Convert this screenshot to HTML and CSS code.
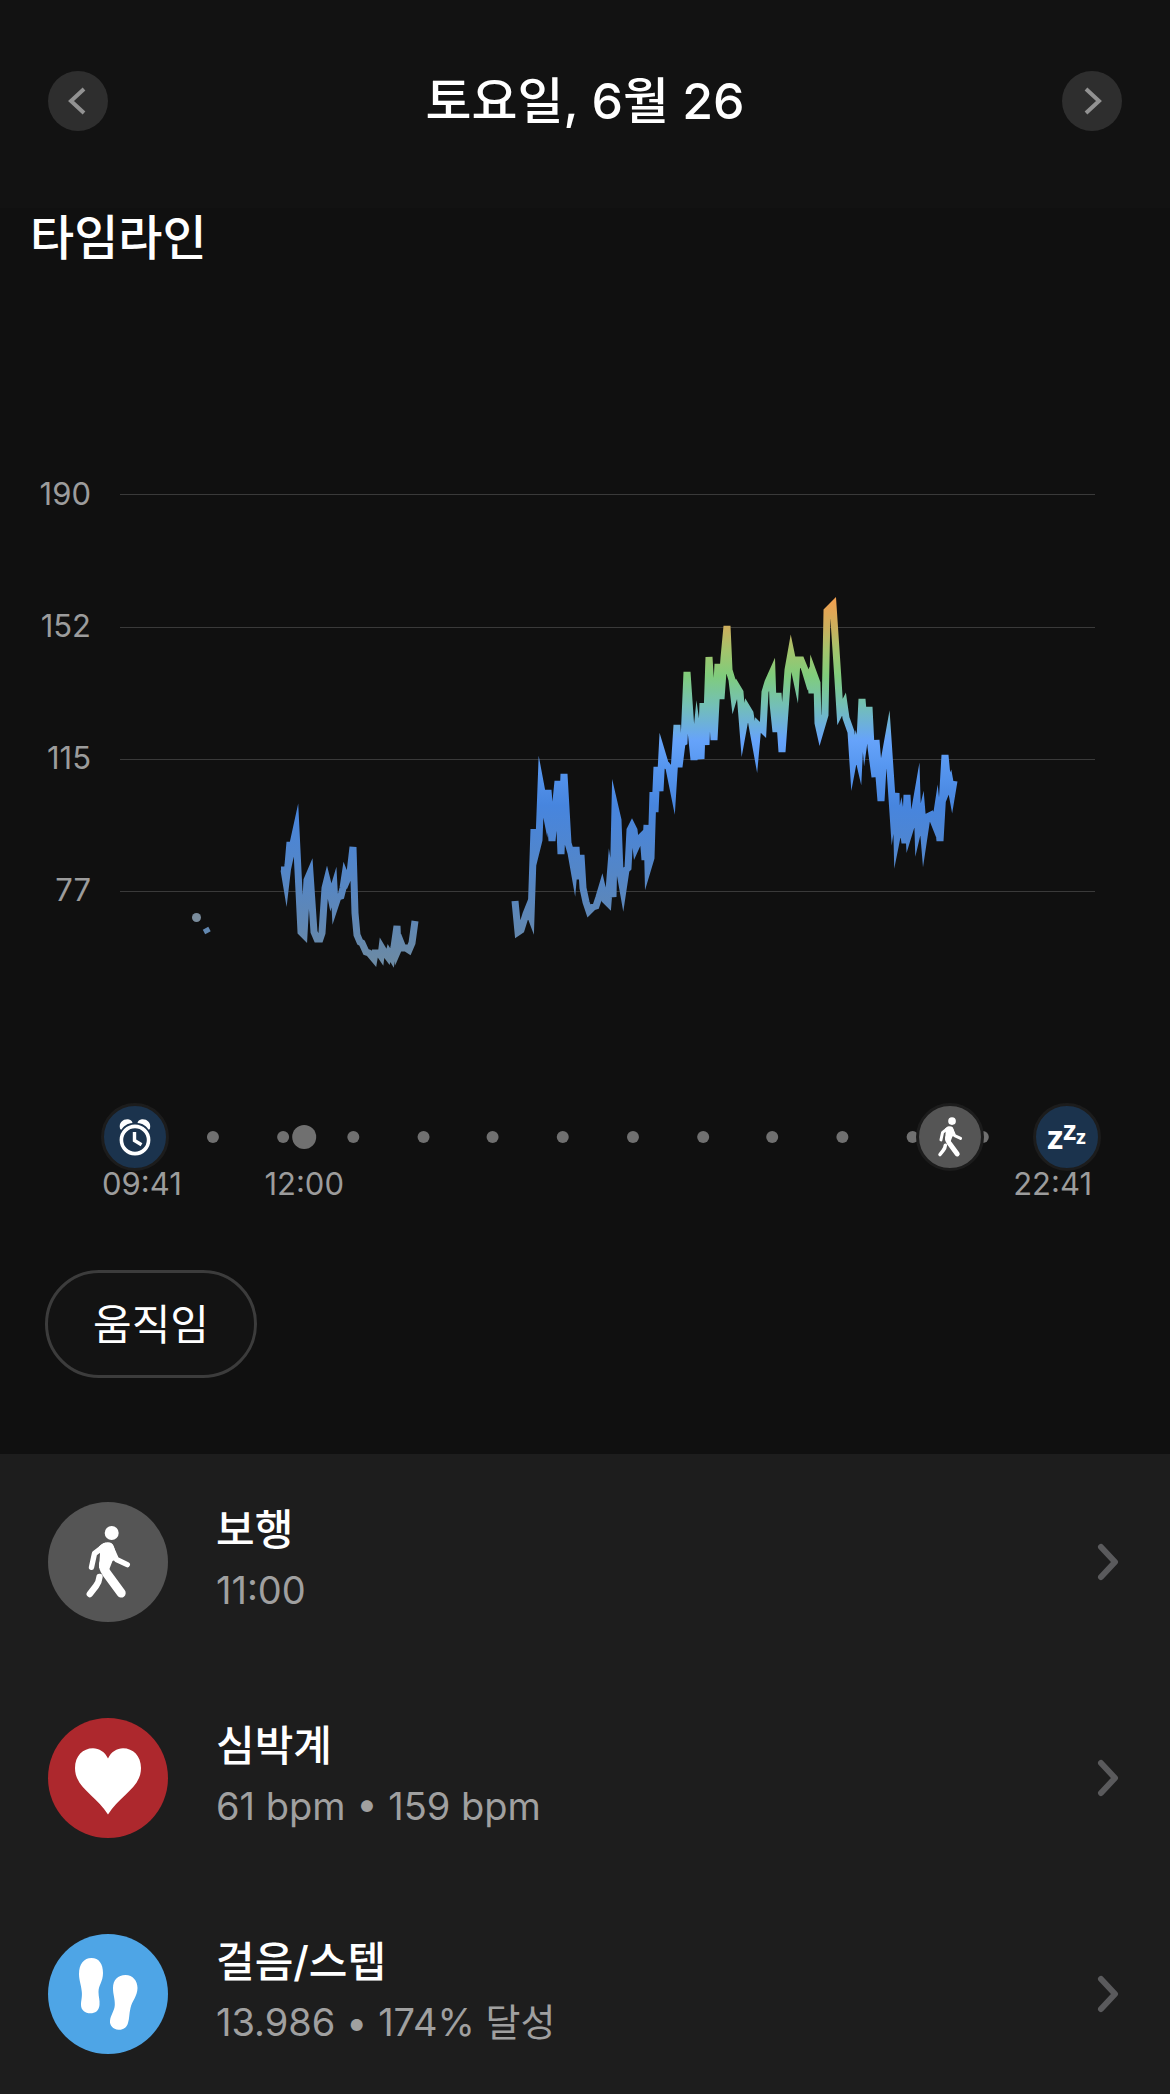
FILE: index.html
```html
<!DOCTYPE html>
<html lang="ko">
<head>
    <meta charset="UTF-8">
    <meta name="viewport" content="width=device-width, initial-scale=1.0">
    <title>타임라인</title>

    <link rel="stylesheet" href="styles.css">
</head>
<body>
    <header class="day-header">
        <button class="day-btn" aria-label="이전 날">
            <svg viewBox="0 0 60 60"><path d="M36 18 L23 30 L36 42"/></svg>
        </button>
        <h1>토요일, 6월 26</h1>
        <button class="day-btn" aria-label="다음 날">
            <svg viewBox="0 0 60 60"><path d="M24 18 L37 30 L24 42"/></svg>
        </button>
    </header>
    <main>
        <section class="timeline">
            <h2>타임라인</h2>
            <div class="chart">
                <div class="axis">
                    <span>190</span>
                    <span>152</span>
                    <span>115</span>
                    <span>77</span>
                </div>
                <svg class="plot" viewBox="120 428 975 560">
                    <defs>
                        <linearGradient id="heat" gradientUnits="userSpaceOnUse" x1="0" y1="600" x2="0" y2="960">
                            <stop offset="0" stop-color="#f0a050"/>
                            <stop offset="0.08" stop-color="#c9b05e"/>
                            <stop offset="0.14" stop-color="#a3c46c"/>
                            <stop offset="0.21" stop-color="#80cc7c"/>
                            <stop offset="0.29" stop-color="#74c0b4"/>
                            <stop offset="0.39" stop-color="#66a3fa"/>
                            <stop offset="0.46" stop-color="#5797f0"/>
                            <stop offset="0.57" stop-color="#4785de"/>
                            <stop offset="0.75" stop-color="#5386c8"/>
                            <stop offset="0.9" stop-color="#6087b3"/>
                            <stop offset="1" stop-color="#6b8aa5"/>
                        </linearGradient>
                    </defs>
                    <g class="grid">
                        <path d="M120 494.5 H1095"/>
                        <path d="M120 627.5 H1095"/>
                        <path d="M120 759.5 H1095"/>
                        <path d="M120 891.5 H1095"/>
                    </g>
                    <circle cx="196.5" cy="917.5" r="4.5" fill="#7a8c9c"/>
                    <g class="pulse">
                        <path class="blip" d="M204 932 L209.5 929"/>
                        <path d="M281 870 L284 870 L286 882 L288 865 L290 842 L291 853 L296 830 L301 932 L304 935 L307 880 L310 873 L314 932 L317 939 L320 939 L322 933 L325 888 L327 880 L330 892 L331 897 L334 887 L335 906 L338 897 L341 896 L343 888 L345 875 L347 880 L350 873 L353 847 L355 913 L357 935 L360 942 L362 943 L366 952 L369 953 L374 959 L375 953 L379 953 L381 956 L382 948 L385 953 L388 957 L389 953 L392 958 L394 947 L397 926 L398 950 L401 943 L403 948 L406 948 L409 950 L412 943 L415 921"/>
                        <path d="M515 901 L518 932 L521 930 L526 914 L528 909 L531 917 L534 829 L536 852 L539 840 L541 787 L544 803 L546 813 L548 790 L552 841 L558 781 L561 854 L564 774 L568 843 L571 853 L574 870 L576 847 L578 879 L581 855 L583 888 L586 902 L589 911 L593 907 L596 906 L599 897 L602 887 L605 900 L608 903 L610 878 L613 897 L615 807 L618 820 L620 873 L623 890 L626 870 L628 868 L630 830 L632 826 L634 830 L636 847 L640 838 L643 835 L645 860 L647 825 L648 868 L651 858 L653 792 L655 812 L657 767 L660 791 L662 753 L665 763 L669 768 L673 788 L677 725 L679 767 L682 743 L684 742 L687 672 L691 730 L694 760 L697 730 L701 759 L703 703 L706 745 L709 657 L714 740 L718 664 L721 699 L724 658 L727 626 L729 670 L732 680 L734 697 L737 687 L740 692 L743 730 L747 708 L750 713 L752 725 L756 747 L758 725 L763 730 L765 692 L768 682 L772 673 L773 703 L776 732 L778 693 L782 752 L788 670 L791 653 L796 677 L797 660 L801 660 L805 670 L808 680 L810 675 L812 693 L813 672 L817 683 L818 723 L820 732 L825 715 L827 611 L833 605 L838 680 L840 712 L844 704 L846 718 L851 732 L853 763 L856 747 L859 760 L862 699 L865 735 L869 707 L871 747 L875 777 L876 740 L881 801 L883 767 L888 739 L893 813 L896 793 L897 837 L901 817 L905 843 L907 795 L909 833 L913 820 L917 797 L918 830 L922 813 L924 837 L927 817 L931 815 L935 825 L937 812 L940 841 L945 755 L948 787 L950 782 L952 793 L954 781"/>
                    </g>
                </svg>
            </div>

            <div class="track">
                <svg class="dots">
                    <circle cx="18.2%" cy="30" r="6"/>
                    <circle cx="24.2%" cy="30" r="6"/>
                    <circle cx="26%" cy="30" r="12"/>
                    <circle cx="30.2%" cy="30" r="6"/>
                    <circle cx="36.2%" cy="30" r="6"/>
                    <circle cx="42.1%" cy="30" r="6"/>
                    <circle cx="48.1%" cy="30" r="6"/>
                    <circle cx="54.1%" cy="30" r="6"/>
                    <circle cx="60.1%" cy="30" r="6"/>
                    <circle cx="66%" cy="30" r="6"/>
                    <circle cx="72%" cy="30" r="6"/>
                    <circle cx="78%" cy="30" r="6"/>
                    <circle cx="84%" cy="30" r="6"/>
                </svg>
                <div class="marker wake" style="left: 11.5%">
                    <svg viewBox="0 0 68 68">
                        <circle cx="34" cy="37" r="13.6" fill="none" stroke="#fff" stroke-width="3.6"/>
                        <path d="M33.5 29 V37.5 L40.5 41.8" fill="none" stroke="#fff" stroke-width="3.4"/>
                        <path d="M19 25.5 C17.5 19 23 15.5 28 16.5 Q31 17 31.5 20 C26 20.5 23 23 20.5 26.5 Q19.6 27 19 25.5 Z" fill="#fff"/>
                        <path d="M49 25.5 C50.5 19 45 15.5 40 16.5 Q37 17 36.5 20 C42 20.5 45 23 47.5 26.5 Q48.4 27 49 25.5 Z" fill="#fff"/>
                    </svg>
                </div>
                <div class="marker walk" style="left: 81.2%">
                    <svg viewBox="-2 -2 124 124"><use href="#walker"/></svg>
                </div>
                <div class="marker sleep" style="left: 91.2%">
                    <svg viewBox="0 0 68 68">
                        <text x="14" y="46" font-size="33">z</text>
                        <text x="30" y="37" font-size="27">z</text>
                        <text x="43" y="41" font-size="20">z</text>
                    </svg>
                </div>
            </div>
            <div class="hours">
                <span>09:41</span>
                <span class="noon" style="left: 26%">12:00</span>
                <span>22:41</span>
            </div>

            <button class="pill">움직임</button>
        </section>

        <nav class="stats">
            <a class="stat" href="#">
                <svg class="stat-icon gray" viewBox="0 0 120 120">
                    <g id="walker" fill="none" stroke="#fff" stroke-linecap="round" stroke-linejoin="round">
                        <circle cx="63.7" cy="31" r="7" fill="#fff" stroke="none"/>
                        <path d="M51 44.5 Q56 40 60 40.3 Q64.5 40.5 66 45 L69.5 57 L64.5 59 L61 68 L51 66 L52 52 Z" fill="#fff" stroke="none"/>
                        <path d="M57 43.5 L46.5 51.5 L43.5 65.3" stroke-width="5.4"/>
                        <path d="M62.5 44 L68.5 57.5 L79.3 62.6" stroke-width="5.4"/>
                        <path d="M55.5 62 Q55 66 58.5 71 L73.2 91" stroke-width="9"/>
                        <path d="M51.5 75 Q51 80 48 84 L41.8 92" stroke-width="6.4"/>
                    </g>
                </svg>
                <span class="stat-text">
                    <span class="stat-name">보행</span>
                    <span class="stat-value">11:00</span>
                </span>
                <svg class="chevron" viewBox="0 0 24 40"><path d="M5 5 L19 20 L5 35"/></svg>
            </a>
            <a class="stat" href="#">
                <svg class="stat-icon red" viewBox="0 0 120 120">
                    <path fill="#fff" d="M60 40.5 C57 34 51 30.3 45 30.3 C35 30.3 27 38 27 50 C27 70 48 77 60 96.5 C72 77 93 70 93 50 C93 38 85 30.3 75 30.3 C69 30.3 63 34 60 40.5 Z"/>
                </svg>
                <span class="stat-text">
                    <span class="stat-name">심박계</span>
                    <span class="stat-value">61 bpm • 159 bpm</span>
                </span>
                <svg class="chevron" viewBox="0 0 24 40"><path d="M5 5 L19 20 L5 35"/></svg>
            </a>
            <a class="stat" href="#">
                <svg class="stat-icon blue" viewBox="0 0 120 120">
                    <path fill="#fff" d="M43.5 24 C51 24 55 30 55 39 C55 48 50.5 51 50.5 58 C50.5 63 52 66 51.5 71 C51 77 47 79.3 42.5 79.3 C37 79.3 33 76 33 71 C33 66 34.5 63 33.7 57 C33 50 31 46 31 40 C31 30 36 24 43.5 24 Z"/>
                    <path fill="#fff" d="M77.5 41 C85 41 89.5 47 89.5 54 C89.5 62 84 67 82.5 74 C81 80 81.5 84 80 89 C78.5 94 75 96 70.5 95.7 C65 95.5 61.5 91 62 87 C62.5 81 66.5 77 66.8 71 C67 64 65 61 65 54 C65 46 70 41 77.5 41 Z"/>
                </svg>
                <span class="stat-text">
                    <span class="stat-name">걸음/스텝</span>
                    <span class="stat-value">13.986 • 174% 달성</span>
                </span>
                <svg class="chevron" viewBox="0 0 24 40"><path d="M5 5 L19 20 L5 35"/></svg>
            </a>
        </nav>
    </main>
</body>
</html>
```
FILE: styles.css
```css
* {
    box-sizing: border-box;
}
body {
    margin: 0;
    font-family: Inter, "Noto Sans CJK KR", sans-serif;
    background: #101010;
    color: #fff;
}
h1, h2 {
    margin: 0;
    font-weight: 500;
    line-height: 60px;
}
h1 {
    font-size: 50px;
}
h2 {
    font-size: 48px;
    padding-left: 30px;
}
.day-header {
    display: flex;
    justify-content: space-between;
    align-items: center;
    padding: 71px 48px 77px;
    background: #121212;
}
.day-btn {
    width: 60px;
    height: 60px;
    padding: 0;
    border: none;
    border-radius: 50%;
    background: #2e2e2e;
    cursor: pointer;
}
.day-btn svg {
    display: block;
}
.day-btn path {
    fill: none;
    stroke: #929292;
    stroke-width: 4;
}

/* heart rate chart */
.timeline {
    padding-bottom: 76px;
}
.chart {
    display: flex;
    align-items: flex-start;
    gap: 29px;
    margin-top: 160px;
    padding-right: 75px;
}
.axis {
    display: flex;
    flex-direction: column;
    width: 91px;
    text-align: right;
    font-size: 31px;
    line-height: 132px;
    color: #9c9c9c;
}
.plot {
    display: block;
    flex: 1;
    min-width: 0;
}
.grid path {
    stroke: #3a3a3a;
    stroke-width: 1;
}
.pulse path {
    fill: none;
    stroke: url(#heat);
    stroke-width: 7;
    stroke-miterlimit: 10;
}
.pulse .blip {
    stroke-width: 5;
}

/* day track with markers */
.track {
    position: relative;
    margin-top: 119px;
    height: 60px;
}
.dots {
    display: block;
    width: 100%;
    height: 60px;
    fill: #707070;
}
.marker {
    position: absolute;
    top: 50%;
    width: 68px;
    height: 68px;
    border: 3px solid #1c1c1c;
    border-radius: 50%;
    transform: translate(-50%, -50%);
}
.marker svg {
    display: block;
    margin: -3px;
    width: 68px;
    height: 68px;
}
.marker text {
    font-family: "Noto Sans", sans-serif;
    font-weight: 700;
    fill: #fff;
}
.wake, .sleep {
    background: #1b334d;
}
.walk {
    background: #555;
}
.hours {
    position: relative;
    display: flex;
    justify-content: space-between;
    padding: 0 78px 0 102px;
    font-size: 31px;
    line-height: 34px;
    color: #9c9c9c;
}
.noon {
    position: absolute;
    transform: translateX(-50%);
}
.pill {
    display: block;
    margin: 69px 0 0 45px;
    padding: 0 45px 6px;
    height: 108px;
    border: 3px solid #3c3c3c;
    border-radius: 54px;
    background: #131313;
    color: #fff;
    font-family: inherit;
    font-size: 42px;
    cursor: pointer;
}

/* daily stats */
.stats {
    background: #1d1d1d;
}
.stat {
    display: flex;
    align-items: center;
    padding: 48px 50px 48px 48px;
    color: inherit;
    text-decoration: none;
}
.stat:last-child {
    padding-bottom: 40px;
}
.stat-icon {
    width: 120px;
    height: 120px;
    border-radius: 50%;
}
.gray {
    background: #555;
}
.red {
    background: #ad282d;
}
.blue {
    background: #4ea5e6;
}
.stat-text {
    flex: 1;
    display: flex;
    flex-direction: column;
    margin-left: 48px;
}
.stat-name {
    font-size: 42px;
    font-weight: 500;
    line-height: 56px;
}
.stat-value {
    font-size: 38px;
    line-height: 64px;
    color: #a0a0a0;
}
.chevron {
    width: 24px;
    height: 40px;
}
.chevron path {
    fill: none;
    stroke: #5a5a5c;
    stroke-width: 6;
    stroke-linecap: round;
    stroke-linejoin: round;
}
```
